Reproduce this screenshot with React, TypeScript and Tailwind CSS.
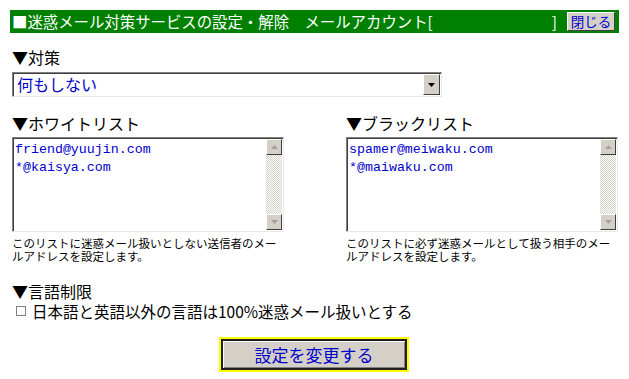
const jp = "font-['MS_PGothic','Noto_Sans_CJK_JP',sans-serif]";
const mono = "font-['Liberation_Mono','Noto_Sans_CJK_JP',monospace]";

function ScrollArrow({ up }: { up: boolean }) {
  return (
    <div className="w-[16px] h-[16px] bg-[#d4d0c8] border border-t-white border-l-white border-b-[#404040] border-r-[#404040] flex items-center justify-center">
      <svg width="7" height="4" viewBox="0 0 7 4">
        {up ? <polygon points="0,4 7,4 3.5,0" fill="#a0a0a0" /> : <polygon points="0,0 7,0 3.5,4" fill="#a0a0a0" />}
      </svg>
    </div>
  );
}

function ListBox({ lines }: { lines: string[] }) {
  return (
    <div className="flex w-[272px] h-[95px] border border-t-[#808080] border-l-[#808080] border-b-[#e8e8e8] border-r-[#e8e8e8] shadow-[inset_1px_1px_0_#404040] bg-white">
      <div className={`flex-1 pl-[2px] pt-[3px] text-[13.3px] leading-[18px] text-[#0000cc] ${mono}`}>
        {lines.map((l) => (
          <div key={l}>{l}</div>
        ))}
      </div>
      <div className="w-[16px] mt-[1px] mr-[1px] mb-[1px] flex flex-col bg-[repeating-conic-gradient(#d4d0c8_0_25%,#ffffff_0_50%)] bg-[length:2px_2px]">
        <ScrollArrow up />
        <div className="flex-1" />
        <ScrollArrow up={false} />
      </div>
    </div>
  );
}

export default function App() {
  return (
    <div className={`w-[629px] h-[379px] bg-white text-black pt-[10px] pl-[10px] ${jp}`}>
      {/* title bar */}
      <div className="w-[609px] h-[23px] bg-[#008000] flex items-center pl-[2px] text-white text-[15.4px] leading-none">
        <span>■迷惑メール対策サービスの設定・解除　メールアカウント[</span>
        <span className="ml-auto">]</span>
        <button className="ml-[10px] mr-[4px] w-[48px] h-[19px] bg-[#d4d0c8] border border-t-white border-l-white border-b-[#404040] border-r-[#404040] text-[#0000cc] text-[13.5px] leading-none">
          閉じる
        </button>
      </div>

      {/* 対策 */}
      <div className="mt-[14px] pl-[2px] h-[20px] text-[16px] leading-[20px]">▼対策</div>
      <div className="mt-[5px] ml-[2px] w-[430px] h-[25px] flex border border-t-[#808080] border-l-[#808080] border-b-[#e8e8e8] border-r-[#e8e8e8] shadow-[inset_1px_1px_0_#404040] bg-white">
        <div className="flex-1 pl-[4px] text-[16px] leading-[23px] text-[#0000cc]">何もしない</div>
        <div className="w-[17px] mt-[1px] mr-[1px] mb-[1px] bg-[#d4d0c8] border border-t-white border-l-white border-b-[#404040] border-r-[#404040] flex items-center justify-center">
          <svg width="7" height="4" viewBox="0 0 7 4">
            <polygon points="0,0 7,0 3.5,4" fill="#000" />
          </svg>
        </div>
      </div>

      {/* lists */}
      <div className="mt-[16px] ml-[2px] flex gap-[62px]">
        <div className="w-[272px]">
          <div className="h-[20px] text-[16px] leading-[20px]">▼ホワイトリスト</div>
          <div className="mt-[4px]">
            <ListBox lines={["friend@yuujin.com", "*@kaisya.com"]} />
          </div>
          <div className="mt-[5px] text-[11.5px] leading-[13px]">
            このリストに迷惑メール扱いとしない送信者のメールアドレスを設定します。
          </div>
        </div>
        <div className="w-[272px]">
          <div className="h-[20px] text-[16px] leading-[20px]">▼ブラックリスト</div>
          <div className="mt-[4px]">
            <ListBox lines={["spamer@meiwaku.com", "*@maiwaku.com"]} />
          </div>
          <div className="mt-[5px] text-[11.5px] leading-[13px]">
            このリストに必ず迷惑メールとして扱う相手のメールアドレスを設定します。
          </div>
        </div>
      </div>

      {/* 言語制限 */}
      <div className="mt-[19px] pl-[2px] h-[18px] text-[16px] leading-[18px]">▼言語制限</div>
      <div className="mt-[2px] flex items-center h-[18px] pl-[6px] text-[15.5px] leading-[18px]">
        <div className="w-[10px] h-[10px] border border-[#808080] bg-white mr-[6px]" />
        <span>日本語と英語以外の言語は100%迷惑メール扱いとする</span>
      </div>

      {/* submit */}
      <div className="mt-[17px] ml-[209px] w-[190px] h-[35px] border-2 border-[#ffff00]">
        <div className="w-full h-full border-2 border-[#202020] bg-[#d4d0c8] shadow-[inset_1px_1px_0_#ffffff,inset_-1px_-1px_0_#808080] flex items-center justify-center text-[17px] text-[#0000cc]">
          設定を変更する
        </div>
      </div>
    </div>
  );
}
